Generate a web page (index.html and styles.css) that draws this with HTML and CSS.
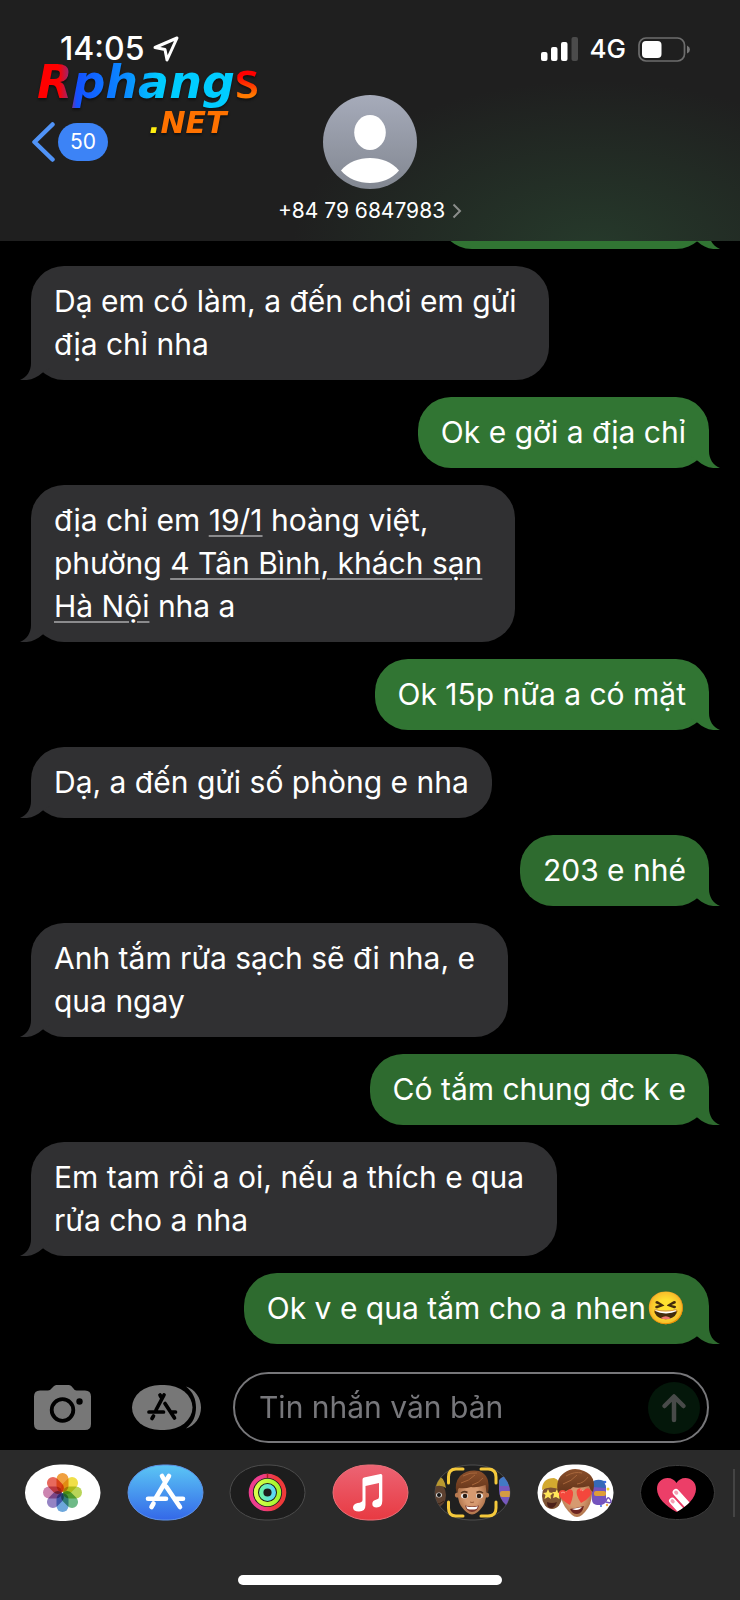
FILE: index.html
```html
<!DOCTYPE html>
<html lang="vi">
<head>
<meta charset="utf-8">
<meta name="viewport" content="width=device-width, initial-scale=1">
<title>+84 79 6847983</title>
<link rel="stylesheet" href="styles.css">
</head>
<body>
<svg class="defs" aria-hidden="true">
  <defs>
    <symbol id="tail" viewBox="0 0 30 34"><path d="M11 0V17C11 25 7 31 0 34C9 35 17 32 22 27L30 22V0Z"/></symbol>
    <linearGradient id="g-store" x2="0" y2="1"><stop stop-color="#5bc6f5"/><stop offset="1" stop-color="#3468e8"/></linearGradient>
    <linearGradient id="g-music" x2="0" y2="1"><stop stop-color="#ec6474"/><stop offset="1" stop-color="#e83a42"/></linearGradient>
    <linearGradient id="g-avatar" x2="0" y2="1"><stop stop-color="#a6abba"/><stop offset="1" stop-color="#828791"/></linearGradient>
    <linearGradient id="g-ring1"><stop offset=".3" stop-color="#ee3d8e"/><stop offset=".75" stop-color="#ee3a3a"/></linearGradient>
    <linearGradient id="g-ring2"><stop stop-color="#d8ff4a"/><stop offset="1" stop-color="#a2f62f"/></linearGradient>
    <linearGradient id="g-ring3"><stop stop-color="#6cf5a8"/><stop offset="1" stop-color="#5cd8f5"/></linearGradient>
    <linearGradient id="g-hair" x2="0" y2="1"><stop stop-color="#8a4f2b"/><stop offset="1" stop-color="#63341a"/></linearGradient>
    <radialGradient id="g-skin"><stop offset=".5" stop-color="#d69a70"/><stop offset="1" stop-color="#b0734a"/></radialGradient>
    <clipPath id="pill"><rect x="1" y="1" width="75" height="55" rx="35" ry="27.5"/></clipPath>
    <clipPath id="heart"><path d="M37.500 48C27 42 18 34 18 25C18 18 23 14 28.500 14C32.500 14 36 16 37.500 19C39 16 42.500 14 46.500 14C52 14 57 18 57 25C57 34 48 42 37.500 48Z"/></clipPath>
  </defs>
</svg>

<div class="app">
  <header class="header">
    <div class="status">
      <div class="status-left">
        <time class="clock">14:05</time>
        <svg class="location" viewBox="0 0 26 26"><path d="M2 11.500L24 2L14 24L12 13.500Z" fill="none" stroke="#fff" stroke-width="3" stroke-linejoin="round"/></svg>
      </div>
      <div class="status-right">
        <svg class="signal" viewBox="0 0 37 24" fill="#fff"><rect y="15" width="6.500" height="9" rx="2"/><rect x="10" y="10" width="6.500" height="14" rx="2"/><rect x="20" y="5" width="6.500" height="19" rx="2"/><rect x="30.500" width="6.500" height="24" rx="2" fill="#4b4b4b"/></svg>
        <span class="network">4G</span>
        <svg class="battery" viewBox="0 0 52 25"><rect x="1" y="1" width="45.500" height="23" rx="7" fill="none" stroke="#6d6d6d" stroke-width="1.700"/><rect x="4" y="4" width="19.500" height="17" rx="4" fill="#fff"/><path d="M49 8.500Q52 10 52 12.500T49 16.500Z" fill="#777"/></svg>
      </div>
    </div>
    <div class="nav">
      <button class="back" aria-label="Quay lại">
        <svg class="back-arrow" viewBox="0 0 23 40"><path d="M20.500 2.500L2.500 20L20.500 37.500" fill="none" stroke="#5093f7" stroke-width="4.500" stroke-linecap="round" stroke-linejoin="round"/></svg>
        <span class="badge">50</span>
      </button>
      <button class="contact">
        <svg class="avatar" viewBox="0 0 94 94"><circle cx="47" cy="47" r="47" fill="url(#g-avatar)"/><ellipse cx="47" cy="37.500" rx="15.800" ry="17.500" fill="#fff"/><path d="M18 75.500C25 67 36 63 47 63S69 67 76 75.500C69 84 58 88 47 88S25 84 18 75.500Z" fill="#fff"/></svg>
        <span class="contact-name">+84 79 6847983
          <svg class="more" viewBox="0 0 10 16"><path d="M1.500 1.500L8 8L1.500 14.500" fill="none" stroke="#8b8d8b" stroke-width="2"/></svg>
        </span>
      </button>
    </div>
    <div class="brand">
      <div class="brand-top"><span class="brand-name">Rphang</span><span class="brand-s">s</span></div>
      <div class="brand-net"><span class="brand-dot">.</span>NET</div>
    </div>
  </header>

  <main class="thread">
    <div class="msg out previous" aria-hidden="true"><svg class="tail"><use href="#tail"/></svg></div>
    <div class="msg in wrapped">Dạ em có làm, a đến chơi em gửi<br>địa chỉ nha<svg class="tail"><use href="#tail"/></svg></div>
    <div class="msg out">Ok e gởi a địa chỉ<svg class="tail"><use href="#tail"/></svg></div>
    <div class="msg in wrapped">địa chỉ em <a href="#map">19/1</a> hoàng việt,<br>phường <a href="#map">4 Tân Bình, khách sạn<br>Hà Nội</a> nha a<svg class="tail"><use href="#tail"/></svg></div>
    <div class="msg out">Ok 15p nữa a có mặt<svg class="tail"><use href="#tail"/></svg></div>
    <div class="msg in">Dạ, a đến gửi số phòng e nha<svg class="tail"><use href="#tail"/></svg></div>
    <div class="msg out low">203 e nhé<svg class="tail"><use href="#tail"/></svg></div>
    <div class="msg in wrapped">Anh tắm rửa sạch sẽ đi nha, e<br>qua ngay<svg class="tail"><use href="#tail"/></svg></div>
    <div class="msg out low">Có tắm chung đc k e<svg class="tail"><use href="#tail"/></svg></div>
    <div class="msg in wrapped">Em tam rồi a oi, nếu a thích e qua<br>rửa cho a nha<svg class="tail"><use href="#tail"/></svg></div>
    <div class="msg out low">Ok v e qua tắm cho a nhen<span class="emoji">😆</span><svg class="tail"><use href="#tail"/></svg></div>
  </main>

  <form class="composer">
    <button type="button" class="tool" aria-label="Máy ảnh">
      <svg class="camera" viewBox="0 0 57 45"><path d="M6 5.500H14Q16 5.500 18 3T22 0H35Q37 0 39 3T43 5.500H51Q57 5.500 57 11.500V39Q57 45 51 45H6Q0 45 0 39V11.500Q0 5.500 6 5.500Z" fill="#777"/><circle cx="28.500" cy="25" r="10.800" fill="none" stroke="#000" stroke-width="3.800"/><circle cx="45.500" cy="16.500" r="3.200"/></svg>
    </button>
    <button type="button" class="tool" aria-label="Ứng dụng">
      <svg class="apps" viewBox="0 0 69 45"><rect width="60.500" height="45" rx="28" ry="22.500" fill="#777"/><path d="M54 1.500C63 4 69 13 69 22.500S63 41 54 43.500C61 38 64 31 64 22.500S61 7 54 1.500Z" fill="#777"/><path d="M32 10L24 25M28 10L30 13.500M33 18.500L42.500 33M17 27H31.500M39 27H43.500M21.500 31L20 33.500" stroke="#000" stroke-width="3.700" stroke-linecap="round"/></svg>
    </button>
    <div class="field">
      <input class="text" type="text" placeholder="Tin nhắn văn bản" aria-label="Tin nhắn văn bản">
      <button class="send" aria-label="Gửi"><svg viewBox="0 0 52 52"><path d="M26 38V15M16.500 24L26 14.500L35.500 24" fill="none" stroke="#484a49" stroke-width="4.500" stroke-linecap="round" stroke-linejoin="round"/></svg></button>
    </div>
  </form>

  <footer class="drawer">
    <div class="shelf">
      <div class="shelf-apps">
        <button class="chip" aria-label="Ảnh"><svg viewBox="0 0 77 57"><rect x="1" y="0.500" width="75.500" height="56.500" rx="35" ry="28" fill="#fff"/>
          <g class="petals">
            <rect x="32.500" y="9" width="12" height="19" rx="6" fill="#f0a040"/>
            <rect x="32.500" y="9" width="12" height="19" rx="6" fill="#f0df48" transform="rotate(45 38.500 28.500)"/>
            <rect x="32.500" y="9" width="12" height="19" rx="6" fill="#b9d558" transform="rotate(90 38.500 28.500)"/>
            <rect x="32.500" y="9" width="12" height="19" rx="6" fill="#6fba87" transform="rotate(135 38.500 28.500)"/>
            <rect x="32.500" y="9" width="12" height="19" rx="6" fill="#6da7dc" transform="rotate(180 38.500 28.500)"/>
            <rect x="32.500" y="9" width="12" height="19" rx="6" fill="#9584c4" transform="rotate(225 38.500 28.500)"/>
            <rect x="32.500" y="9" width="12" height="19" rx="6" fill="#cc85b0" transform="rotate(270 38.500 28.500)"/>
            <rect x="32.500" y="9" width="12" height="19" rx="6" fill="#e8695d" transform="rotate(315 38.500 28.500)"/>
          </g></svg></button>
        <button class="chip" aria-label="App Store"><svg viewBox="0 0 77 57"><rect x="1" y="1" width="75" height="55" rx="35" ry="27.500" fill="url(#g-store)" stroke="#5e93e8"/><path d="M42 12L28.500 34.500M35 12L38 17.500M39.500 23L53 43M21 34.700H39M49 34.700H56M26.500 39.500L24.500 43" stroke="#fff" stroke-width="4.600" stroke-linecap="round"/></svg></button>
        <button class="chip" aria-label="Hoạt động"><svg viewBox="0 0 77 57"><rect x="1" y="1" width="75" height="55" rx="35" ry="27.500" fill="#1d1d1d" stroke="#4c4c4c"/><g fill="none"><circle cx="38.500" cy="28.500" r="16.700" stroke="url(#g-ring1)" stroke-width="4.200"/><path d="M38.500 9.600V14" stroke="#a82424" stroke-width="1.500"/><circle cx="38.500" cy="28.500" r="11.600" stroke="url(#g-ring2)" stroke-width="4.200"/><circle cx="38.500" cy="28.500" r="6.300" stroke="url(#g-ring3)" stroke-width="4.400"/></g></svg></button>
        <button class="chip" aria-label="Nhạc"><svg viewBox="0 0 77 57"><rect x="1" y="1" width="75" height="55" rx="35" ry="27.500" fill="url(#g-music)" stroke="#ec7079"/><path d="M30.500 15.500Q30.500 14 32 13.600L48.500 10Q50.300 9.700 50.300 11.500V37Q50.300 43.500 44.500 43.500Q40.300 43.500 40.300 39.700Q40.300 36.500 44.500 35.500Q47 35 47 33V19L33.500 22V41Q33.500 47.500 27 47.500Q21 47.500 21 43.500Q21 40 25.500 39Q30.500 38.500 30.500 36Z" fill="#fff"/></svg></button>
        <button class="chip" aria-label="Memoji"><svg viewBox="0 0 77 57"><rect x="1" y="1" width="75" height="55" rx="35" ry="27.500" fill="#202020" stroke="#4c4c4c"/>
          <g clip-path="url(#pill)">
            <ellipse cx="3" cy="31" rx="9" ry="12" fill="#5d4130"/><path d="M0 23V11Q10 11 12 24Q6 20 0 23Z" fill="#b9992f"/><ellipse cx="5" cy="31" rx="3" ry="2.500" fill="#ddd"/><circle cx="5" cy="31" r="2" fill="#151515"/><path d="M0 40Q6 41 10 37" stroke="#352015" fill="none"/>
            <path d="M65 17Q67 11 77 13V41H72Q65 35 65 26Z" fill="#7658bd"/><path d="M65 17Q67 11 77 13V22H66Z" fill="#427ac4"/><rect x="66" y="27" width="11" height="6" rx="2" fill="#d49b41"/>
          </g>
          <circle cx="23.500" cy="31" r="2.600" fill="#b77950"/><circle cx="52.500" cy="31" r="2.600" fill="#b77950"/>
          <path d="M23.500 22Q25 13 38 13T52.500 22Q53 36 49 42Q43 50.500 38 50.500T27 42Q23 36 23.500 22Z" fill="url(#g-skin)"/>
          <path d="M22.500 29Q20 19 26 12Q34 5 45 7Q57 11 54 29Q52 27 51.500 21Q43 24 37 23Q31 25 25 24Q23 26 22.500 29Z" fill="url(#g-hair)"/>
          <path d="M29 12Q36 8 43 9M27 19Q35 17 41 11M38 21Q45 19 49 14" fill="none" stroke="#a7663b" stroke-width="1"/>
          <path d="M27 29Q30 26.500 33.500 28.500M42.500 28.500Q46 26.500 49 29" fill="none" stroke="#59351e" stroke-width="1.500"/><ellipse cx="30.500" cy="32" rx="3.500" ry="2.400" fill="#eee"/><ellipse cx="45.500" cy="32" rx="3.500" ry="2.400" fill="#eee"/><circle cx="31" cy="32" r="2.300" fill="#2b1c13"/><circle cx="45" cy="32" r="2.300" fill="#2b1c13"/>
          <path d="M36 38Q38 39 40 38" fill="none" stroke="#9a5f3c"/><path d="M31 41.500Q38 43.500 45 41.500Q43.500 48 38 48T31 41.500Z" fill="#7a352c"/><path d="M32 42.200Q38 44 44 42.200L42.500 45Q38 46 33.500 45Z" fill="#fff"/>
          <path d="M14.500 19V13Q14.500 5 22 5H29M47 5H54Q62 5 62 13V19M62 38V44Q62 52 54 52H47M29 52H22Q14.500 52 14.500 44V38" fill="none" stroke="#f5c93b" stroke-width="3" stroke-linecap="round"/></svg></button>
        <button class="chip" aria-label="Nhãn dán"><svg viewBox="0 0 77 57"><rect x="0.500" y="0.500" width="76" height="56.500" rx="35" ry="28" fill="#fff"/>
          <g fill="#7453bd"><rect x="55" y="18" width="14" height="23" rx="5"/><path d="M66 37Q76 41 73.500 36T69 37" fill="none" stroke="#7453bd" stroke-width="1.500"/></g><path d="M55 23V18Q60 14 67 17L69 24Z" fill="#3569b8"/><rect x="57" y="27" width="12" height="5" rx="2" fill="#df9d36"/><g fill="#396be0"><circle cx="68" cy="18" r="1.300"/><circle cx="64" cy="42" r="1"/></g><circle cx="71" cy="25" r="1.500" fill="#f6d52f"/><circle cx="70" cy="41" r="1.200" fill="#efb14b"/>
          <ellipse cx="15" cy="32" rx="10" ry="13" fill="#7d5233"/><path d="M5 26Q5 14 17 14Q23 15 24 26Q13 21 5 26Z" fill="#d3a930"/><path d="M11 25L12.500 28.500L16 29L13.500 31.500L14 35L11 33L7.500 35L8.500 31L6 29L9.500 28.500Z" fill="#ffe65a"/><path d="M20 25L21.500 28L25 29L22 31L22.500 35L19 33L16 34L17 30L15 28H18.500Z" fill="#ffe65a"/><path d="M10 38Q15 40 20 38Q18 44 14 44T10 38Z" fill="#4c2119"/>
          <path d="M22 22Q28 10 40 11T55 22Q56 36 51 44Q45 53 40 53T28 43Q23 35 22 22Z" fill="url(#g-skin)"/>
          <path d="M21 29Q18 15 27 9Q36 2 47 7Q60 12 56 28Q53 26 52 22Q42 25 36 23Q31 28 24 27Z" fill="url(#g-hair)"/><path d="M29 12Q38 7 45 9M26 20Q35 17 40 11M40 20Q47 19 51 13" fill="none" stroke="#a7663b"/>
          <path d="M33 41Q24 36 22 31Q21 26 26 26Q28 26 29.500 28Q31 24 35 26Q38 29 33 41Z" fill="#f4473c"/><path d="M44 39Q38 30 40 26Q43 22 46.500 27Q49 23 52.500 25Q56 29 53 32Q50 36 44 39Z" fill="#f4473c"/><path d="M24 29Q26 27 28 29M43 26Q44 25 46 27" fill="none" stroke="#ff9b8a"/>
          <path d="M33 45Q40 44 47 42Q45 50 40 50T33 45Z" fill="#6c2420"/><path d="M35 45L45 43L43 45Q39 47 35 45Z" fill="#fff"/></svg></button>
        <button class="chip" aria-label="Digital Touch"><svg viewBox="0 0 77 57"><rect x="1.500" y="1.500" width="74" height="54" rx="35" ry="27" fill="#000" stroke="#3b3b3b"/><g clip-path="url(#heart)"><rect x="16" y="12" width="44" height="38" fill="#ec3e68"/><g transform="rotate(-42 44 35)" fill="#fff"><rect x="40" y="22" width="6.500" height="30" rx="3.200"/><rect x="31.500" y="26" width="6.500" height="30" rx="3.200"/><g fill="#f3a0b5"><rect x="41.500" y="23.500" width="3.500" height="4.500" rx="1.700"/><rect x="33" y="27.500" width="3.500" height="4.500" rx="1.700"/></g></g></g></svg></button>
      </div>
      <span class="divider"></span>
    </div>
    <div class="home"></div>
  </footer>
</div>
</body>
</html>
```
FILE: styles.css
```css
* { box-sizing: border-box; }
body { margin: 0; background: #000; color: #fff; font-family: Inter, "Noto Sans", sans-serif; }
button { margin: 0; padding: 0; border: 0; background: none; color: inherit; font: inherit; display: flex; }
svg { display: block; }
.defs { position: absolute; width: 0; height: 0; }

.app { display: flex; flex-direction: column; height: 100vh; min-height: 900px; overflow: hidden; }

.header {
  position: relative;
  flex: none;
  padding: 34px 50px 18px 32px;
  background: radial-gradient(ellipse 300px 170px at 80% 104%, #263a2b, rgba(38, 58, 43, 0.5) 50%, rgba(32, 36, 33, 0)), #1f1f1f;
}
.status { display: flex; justify-content: space-between; align-items: center; height: 30px; }
.status-left { display: flex; align-items: center; gap: 9px; padding-left: 28px; }
.clock { font-size: 32px; font-weight: 500; line-height: 30px; }
.location { width: 26px; height: 26px; }
.status-right { display: flex; align-items: center; gap: 12px; }
.signal { width: 37px; height: 24px; }
.network { font-size: 26px; font-weight: 500; line-height: 30px; }
.battery { width: 52px; height: 25px; }

.nav { display: grid; grid-template-columns: 1fr auto 1fr; padding-top: 31px; margin-right: -18px; }
.back { align-items: center; gap: 3px; height: 38px; margin-top: 28px; justify-self: start; }
.back-arrow { width: 23px; height: 40px; }
.badge { padding: 0 12px; border-radius: 19px; background: #3c83f6; font-size: 21px; line-height: 38px; }
.contact { flex-direction: column; align-items: center; gap: 10px; }
.avatar { width: 94px; height: 94px; }
.contact-name { display: flex; align-items: center; gap: 7px; font-size: 21px; line-height: 24px; }
.more { width: 10px; height: 16px; }

.brand { position: absolute; left: 37px; top: 52px; filter: drop-shadow(0 2px 1px #111); }
.brand-top { display: flex; align-items: baseline; line-height: 54px; }
.brand-name {
  font: italic bold 46px/54px "DejaVu Sans", sans-serif;
  background: linear-gradient(90deg, #f00 11%, #8a2b80 17%, #1450ff 20%, #0a8cff 45%, #00ccff 62%);
  background-clip: text;
  color: transparent;
}
.brand-s {
  font: 600 50px/54px "Open Sans", sans-serif;
  background: linear-gradient(#f00 45%, #ff7a00 80%);
  background-clip: text;
  color: transparent;
}
.brand-net { margin: -4px 0 0 112px; font: italic bold 30px/36px "DejaVu Sans", sans-serif; color: #ff7200; }
.brand-dot { color: #ffee10; }

.thread {
  flex: 1;
  min-height: 0;
  overflow: hidden;
  display: flex;
  flex-direction: column;
  justify-content: flex-end;
  gap: 17px;
  padding: 0 31px;
}
.msg {
  position: relative;
  flex: none;
  padding: 14px 23px;
  border-radius: 33px;
  font-size: 30px;
  line-height: 43px;
}
.in { align-self: flex-start; background: #303032; color: #fff; }
.wrapped { padding-right: 33px; }
.out { align-self: flex-end; background: #317533; }
.low { background: #2e6b2f; }
.previous { width: 270px; height: 71px; }
.emoji { font-size: 32px; line-height: 32px; }
.tail { position: absolute; bottom: 0; left: -11px; width: 30px; height: 34px; fill: #303032; }
.out .tail { left: auto; right: -11px; transform: scaleX(-1); fill: #317533; }
.low .tail { fill: #2e6b2f; }
.msg a { color: inherit; text-decoration: underline #8b8b8d 2px; text-underline-offset: 4px; }

.composer { flex: none; display: flex; align-items: center; padding: 28px 31px 7px 34px; }
.camera { width: 57px; height: 45px; }
.apps { width: 69px; height: 45px; }
.tool { flex: none; margin-right: 41px; }
.tool + .tool { margin-right: 32px; }
.field { flex: 1; min-width: 0; display: flex; align-items: center; height: 71px; padding: 0 7px 0 24px; border: 2px solid #77777a; border-radius: 36px; }
.text { flex: 1; min-width: 0; border: 0; padding: 0; outline: 0; background: none; color: #fff; font: 30px/43px Inter, "Noto Sans", sans-serif; }
.text::placeholder { color: #77777b; opacity: 1; }
.send { flex: none; width: 52px; height: 52px; border-radius: 50%; background: #04170a; }
.send svg { width: 52px; height: 52px; }

.drawer { flex: none; background: #2a2a2a; padding: 14px 5px 15px 24px; }
.shelf { display: flex; align-items: center; gap: 17px; }
.shelf-apps { flex: 1; display: flex; justify-content: space-between; }
.chip svg { width: 77px; height: 57px; }
.petals rect { mix-blend-mode: multiply; }
.divider { width: 2px; height: 48px; background: #444; }
.home { width: 264px; height: 10px; margin: 54px auto 0; border-radius: 5px; background: #fff; transform: translateX(-10px); }
```
